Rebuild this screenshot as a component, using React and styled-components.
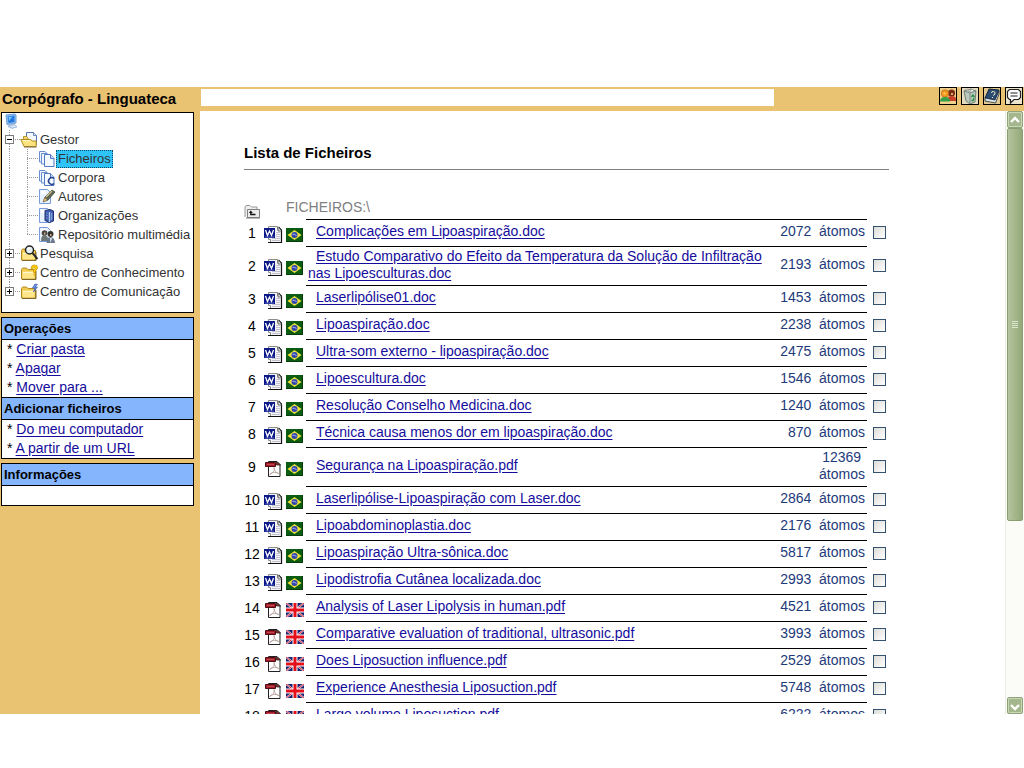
import React, { useState } from "react";
import styled, { createGlobalStyle } from "styled-components";

const files = [
  { name: "Complicações em Lipoaspiração.doc", atoms: 2072, lang: "br" },
  {
    name: "Estudo Comparativo do Efeito da Temperatura da Solução de Infiltração nas Lipoesculturas.doc",
    atoms: 2193,
    lang: "br",
  },
  { name: "Laserlipólise01.doc", atoms: 1453, lang: "br" },
  { name: "Lipoaspiração.doc", atoms: 2238, lang: "br" },
  { name: "Ultra-som externo - lipoaspiração.doc", atoms: 2475, lang: "br" },
  { name: "Lipoescultura.doc", atoms: 1546, lang: "br" },
  { name: "Resolução Conselho Medicina.doc", atoms: 1240, lang: "br" },
  { name: "Técnica causa menos dor em lipoaspiração.doc", atoms: 870, lang: "br" },
  { name: "Segurança na Lipoaspiração.pdf", atoms: 12369, lang: "br" },
  { name: "Laserlipólise-Lipoaspiração com Laser.doc", atoms: 2864, lang: "br" },
  { name: "Lipoabdominoplastia.doc", atoms: 2176, lang: "br" },
  { name: "Lipoaspiração Ultra-sônica.doc", atoms: 5817, lang: "br" },
  { name: "Lipodistrofia Cutânea localizada.doc", atoms: 2993, lang: "br" },
  { name: "Analysis of Laser Lipolysis in human.pdf", atoms: 4521, lang: "uk" },
  { name: "Comparative evaluation of traditional, ultrasonic.pdf", atoms: 3993, lang: "uk" },
  { name: "Does Liposuction influence.pdf", atoms: 2529, lang: "uk" },
  { name: "Experience Anesthesia Liposuction.pdf", atoms: 5748, lang: "uk" },
  { name: "Large volume Liposuction.pdf", atoms: 6222, lang: "uk" },
];

const children = [
  { name: "Ficheiros", icon: "files" },
  { name: "Corpora", icon: "corpora" },
  { name: "Autores", icon: "authors" },
  { name: "Organizações", icon: "organizations" },
  { name: "Repositório multimédia", icon: "media" },
];

const closedFolders = [
  { name: "Pesquisa", icon: "search" },
  { name: "Centro de Conhecimento", icon: "knowledge" },
  { name: "Centro de Comunicação", icon: "communication" },
];

export default function App() {
  const [selected, setSelected] = useState("Ficheiros");

  return (
    <>
      <GlobalStyle />
      <Page>
        <Header>
          <Brand>Corpógrafo - Linguateca</Brand>
          <StatusBox type="text" aria-label="Estado" readOnly />
          <Tools>
            <ToolButton aria-label="Utilizadores">
              <UsersIcon />
            </ToolButton>
            <ToolButton aria-label="Reciclagem">
              <BinIcon />
            </ToolButton>
            <ToolButton aria-label="Ajuda">
              <BookIcon />
            </ToolButton>
            <ToolButton aria-label="Comentários">
              <CommentIcon />
            </ToolButton>
          </Tools>
        </Header>
        <Body>
          <Sidebar>
            <Tree>
              <TreeRoot>
                <ComputerIcon />
              </TreeRoot>
              <TreeRow>
                <Branch $kind="middle">
                  <Expander aria-label="Fechar Gestor">
                    <ExpanderIcon open />
                  </Expander>
                </Branch>
                <FolderIcon kind="open" />
                <TreeLabel>Gestor</TreeLabel>
              </TreeRow>
              {children.map((item, index) => (
                <TreeRow key={item.name}>
                  <Branch $kind="trunk" />
                  <Branch
                    $kind={index === children.length - 1 ? "last" : "middle"}
                  />
                  <DocIcon kind={item.icon} />
                  <TreeLabel
                    className={selected === item.name ? "selected" : ""}
                    onClick={() => setSelected(item.name)}
                  >
                    {item.name}
                  </TreeLabel>
                </TreeRow>
              ))}
              {closedFolders.map((item, index) => (
                <TreeRow key={item.name}>
                  <Branch
                    $kind={
                      index === closedFolders.length - 1 ? "last" : "middle"
                    }
                  >
                    <Expander aria-label={`Abrir ${item.name}`}>
                      <ExpanderIcon />
                    </Expander>
                  </Branch>
                  <FolderIcon kind={item.icon} />
                  <TreeLabel>{item.name}</TreeLabel>
                </TreeRow>
              ))}
            </Tree>
            <Panel>
              <h2>Operações</h2>
              <PanelLinks>
                <li>
                  <a href="#criar">Criar pasta</a>
                </li>
                <li>
                  <a href="#apagar">Apagar</a>
                </li>
                <li>
                  <a href="#mover">Mover para ...</a>
                </li>
              </PanelLinks>
              <h2>Adicionar ficheiros</h2>
              <PanelLinks>
                <li>
                  <a href="#computador">Do meu computador</a>
                </li>
                <li>
                  <a href="#url">A partir de um URL</a>
                </li>
              </PanelLinks>
            </Panel>
            <Panel>
              <h2>Informações</h2>
              <PanelEmpty />
            </Panel>
          </Sidebar>
          <Main>
            <Title>Lista de Ficheiros</Title>
            <FileTable>
              <colgroup>
                <col width="20" />
                <col width="22" />
                <col width="20" />
                <col />
                <col width="88" />
                <col width="22" />
              </colgroup>
              <thead>
                <tr>
                  <IconCell $top>
                    <UpFolderIcon />
                  </IconCell>
                  <td />
                  <PathCell colSpan={4}>FICHEIROS:\</PathCell>
                </tr>
              </thead>
              <tbody>
                {files.map((file, index) => (
                  <FileRow key={file.name}>
                    <NumberCell>{index + 1}</NumberCell>
                    <IconCell>
                      {file.name.endsWith(".pdf") ? <PdfIcon /> : <WordIcon />}
                    </IconCell>
                    <IconCell>
                      {file.lang === "br" ? <BrazilFlag /> : <UkFlag />}
                    </IconCell>
                    <NameCell>
                      <a id={`file-${index}`} href={`#file-${index}`}>
                        {file.name}
                      </a>
                    </NameCell>
                    <CountCell>{`${file.atoms}\u00a0 átomos`}</CountCell>
                    <CheckCell>
                      <input type="checkbox" aria-labelledby={`file-${index}`} />
                    </CheckCell>
                  </FileRow>
                ))}
              </tbody>
            </FileTable>
          </Main>
          <ScrollBar>
            <ScrollButton aria-label="Subir">
              <ArrowIcon d="M4 9 8 5l4 4" />
            </ScrollButton>
            <ScrollTrack>
              <ScrollThumb>
                <i />
                <i />
                <i />
                <i />
              </ScrollThumb>
            </ScrollTrack>
            <ScrollButton aria-label="Descer">
              <ArrowIcon d="m4 6 4 4 4-4" />
            </ScrollButton>
          </ScrollBar>
        </Body>
      </Page>
    </>
  );
}

function ArrowIcon({ d }) {
  return (
    <svg width="16" height="14" viewBox="0 0 16 14">
      <path d={d} fill="none" stroke="#fff" strokeWidth="2.4" />
    </svg>
  );
}

function ExpanderIcon({ open }) {
  return (
    <svg width="9" height="9" viewBox="0 0 9 9" shapeRendering="crispEdges">
      <path d="M.5.5h8v8h-8z" fill="#fff" stroke="#7b7b7b" />
      <path d="M2 4h5v1H2z" fill="#000" />
      {!open && <path d="M4 2h1v5H4z" fill="#000" />}
    </svg>
  );
}

function ComputerIcon() {
  return (
    <svg width="15" height="16" viewBox="0 0 15 16">
      <path d="m2 2 9-1 1 1v8L3 11.500z" fill="#8fc0f0" stroke="#6f9ed6" />
      <path d="m3.500 3.500 7-1V9l-6 1z" fill="#2378e0" />
      <path d="m4.500 4 4-.6L5 8z" fill="#7cc6ff" />
      <path d="m5 12 5-1.500 1 1.500 2 2-5 1.500-4-2z" fill="#b4cbe6" stroke="#88a8d0" strokeWidth=".6" />
      <path d="m6 13.500 5-1 1 1-4 1z" fill="#e3eefb" />
    </svg>
  );
}

function FolderIcon({ kind }) {
  return (
    <svg width="18" height="18" viewBox="0 0 18 18">
      {kind === "open" ? (
        <>
          <path d="M6.500 1.500h7l3 3v9h-10z" fill="#f3f8ff" stroke="#5573b5" />
          <path d="M13.500 1.500v3h3" fill="#c7daf6" stroke="#5573b5" strokeWidth=".8" />
          <path d="M3.500 9V5.500h3L8 7v2" fill="#f5d96b" stroke="#a8801c" strokeWidth=".8" />
          <path d="M.8 8.500h9.700l2 1.500h3.700v5.500H4z" fill="#fbe27c" stroke="#b38a20" />
          <path d="M2.500 9.700H10" stroke="#fff7cf" />
          <path d="M4 16h12.500" stroke="#7b6840" />
        </>
      ) : (
        <>
          <path d="M1.500 15V5.500l1-1.500h4L8 5.500h7.500V15z" fill="#f0c94f" stroke="#b38a20" />
          <path d="M2.500 7.500h12v7h-12z" fill="#ffe68a" />
          <path d="M3 8.500h11" stroke="#fff7cf" />
          <path d="M2 15.500h14V7" fill="none" stroke="#80682c" />
        </>
      )}
      {kind === "search" && (
        <>
          <circle cx="9.500" cy="5" r="4" fill="#e4f1f4" stroke="#222" strokeWidth="1.500" />
          <path d="M7.500 4.500 10 2.500" stroke="#fff" strokeWidth="1.400" />
          <path d="m12.500 8 5 6" stroke="#292929" strokeWidth="2" />
        </>
      )}
      {kind === "knowledge" && (
        <>
          <path d="M11 4.500Q11 1 14.500 1t3 3.200L15.500 7v1.500h-2V6l2-2-1.500-.8L12.500 5z" fill="#ffd400" stroke="#c78e00" strokeWidth=".7" />
          <path d="M13.500 9.500h2v2h-2z" fill="#e8b300" />
        </>
      )}
      {kind === "communication" && (
        <path d="m15 1-2.500 4H15l-1.500 4 4-5H15l2.500-2.500z" fill="#719be9" stroke="#335cb1" strokeWidth=".7" />
      )}
    </svg>
  );
}

function DocIcon({ kind }) {
  const stacked = kind === "files" || kind === "corpora";
  return (
    <svg width="18" height="18" viewBox="0 0 18 18">
      {stacked ? (
        <>
          <path d="M1.500 1.500H7l2 2V12H1.500z" fill="#edf5ff" stroke="#6b8ecf" />
          <path d="M3.500 3.500H9l2 2V14H3.500z" fill="#edf5ff" stroke="#6b8ecf" />
          <path d="M6.500 4.500h6l3.500 4v8H6.500z" fill="#f4f9ff" stroke="#5079c4" />
          <path d="M12.500 4.500v4H16" fill="#c9dcf8" stroke="#5079c4" />
        </>
      ) : (
        <>
          <path d="M1.500 1.500h8l3 3v11h-11z" fill="#e8f2ff" stroke="#799bdc" />
          <path d="M3 3h5v3H3z" fill="#fff" />
        </>
      )}
      {kind === "corpora" && (
        <path d="M16 9.500a3.300 3.300 0 1 0 0 5" fill="none" stroke="#223e8b" strokeWidth="1.500" />
      )}
      {kind === "authors" && (
        <>
          <path d="m5 14 2-5 7-7 3 2-7 8z" fill="#5e6755" stroke="#343a2e" strokeWidth=".7" />
          <path d="m8 9 6-6" stroke="#d3c487" strokeWidth="1.300" />
          <path d="m5 14 2-4 2 2z" fill="#f3c46b" />
        </>
      )}
      {kind === "organizations" && (
        <>
          <path d="m7 3.500 5-1 3.500 1.500V14l-4 1.500L7 13.500z" fill="#3e5daa" stroke="#1f3275" />
          <path d="M11.500 5v10" stroke="#b5cdf7" strokeWidth="1.400" />
          <path d="M8.500 6h1M8.500 8.500h1M8.500 11h1M13.700 6v7" stroke="#8faee8" />
        </>
      )}
      {kind === "media" && (
        <>
          <circle cx="6.500" cy="7" r="2.800" fill="#474540" />
          <path d="M3 15q0-6 3.500-6t4 6z" fill="#6e7773" />
          <circle cx="12.500" cy="8" r="3" fill="#35332f" />
          <path d="M8.500 17q0-6 4-6t4.500 6z" fill="#68798f" />
          <path d="m12 12 .5 5 1.500-5z" fill="#eee" />
          <path d="M6 7.500h1.500M12 9h1.500" stroke="#d6a88a" strokeWidth="1.800" />
        </>
      )}
    </svg>
  );
}

function UpFolderIcon() {
  return (
    <svg width="17" height="15" viewBox="0 0 17 15">
      <path d="M1 13V3l1-1.500h4L7.500 3H13v2" fill="#eee" stroke="#999" />
      <path d="M3.500 5.500h12v8h-12z" fill="#ececec" stroke="#808080" />
      <path d="M2 14h14" stroke="#777" />
      <path d="M11.500 10.500H6.800V8.500" fill="none" stroke="#111" strokeWidth="1.300" />
      <path d="M4.800 9 6.800 6.600 8.800 9z" fill="#111" />
    </svg>
  );
}

function WordIcon() {
  return (
    <svg width="19" height="18" viewBox="0 0 19 18">
      <path d="M4.500.5h9v3h4v13h-11v-3h-2z" fill="#f4f4f6" stroke="#8c8c8c" />
      <path d="M4 16.500h13.500V4.200L14.500 1" fill="none" stroke="#111" strokeWidth="1.200" />
      <path d="M14 1v4h3.500" fill="#ddd" stroke="#555" strokeWidth=".8" />
      <path d="M12 6.500h4M12 8.500h4M12 10.500h4M8 12.500h8M8 14.500h8" stroke="#b4b4c6" strokeWidth=".8" />
      <path d="M0 2h11v10H0z" fill="#0a1787" />
      <path d="m1.500 4 2 5.500L5.500 5l2 4.500 2-5.500" fill="none" stroke="#fff" strokeWidth="1.300" />
      <path d="M1 11h9" stroke="#6f7fd0" strokeWidth=".8" />
    </svg>
  );
}

function PdfIcon() {
  return (
    <svg width="18" height="18" viewBox="0 0 18 18">
      <path d="M4.500 1.500h8.500l3 3v12H4.500z" fill="#fff" stroke="#222" />
      <path d="M12.500 1.500v3.500h4z" fill="#9c2a2a" stroke="#222" strokeWidth=".8" />
      <path d="M1.500 2.500h10v4h-10z" fill="#a51c28" stroke="#4d0d12" />
      <path d="M3 4.500h7" stroke="#bd4a52" />
      <path d="M10 7.500c1 3-1.500 6-4.300 7 .6-2 6-3 9-1-2-.2-4.400-2.500-4.700-6z" fill="none" stroke="#b5a09c" strokeWidth=".9" />
    </svg>
  );
}

function BrazilFlag() {
  return (
    <svg width="17" height="14" viewBox="0 0 17 14">
      <path d="M0 0h17v14H0z" fill="#0b5c12" />
      <path d="M0 13.500h17M16.500 0v14" stroke="#063b0a" />
      <path d="M1.500 7 8.500 2l7 5-7 5z" fill="#efe23c" />
      <circle cx="8.500" cy="7" r="3" fill="#3346ae" />
      <path d="M6.500 6.300q2-.5 4 1.200" fill="none" stroke="#b9c4ee" strokeWidth=".9" />
    </svg>
  );
}

function UkFlag() {
  return (
    <svg width="18" height="14" viewBox="0 0 18 14">
      <path d="M0 0h18v14H0z" fill="#17206e" />
      <path d="m0 0 18 14M18 0 0 14" stroke="#e3cfe0" strokeWidth="2" />
      <path d="m0 0 18 14M18 0 0 14" stroke="#d8232e" strokeWidth=".9" />
      <path d="M9 0v14M0 7h18" stroke="#fff" strokeWidth="5" />
      <path d="M9 0v14M0 7h18" stroke="#e3101b" strokeWidth="3" />
    </svg>
  );
}

function UsersIcon() {
  return (
    <svg width="16" height="16" viewBox="0 0 16 16">
      <path d="M0 0h16v16H0z" fill="#f0d18c" />
      <circle cx="11.500" cy="5" r="3.600" fill="#7a2c16" />
      <path d="M7 13q0-5 4.500-5t4.500 3v2z" fill="#c8402a" />
      <circle cx="5" cy="5.500" r="3.700" fill="#f39a1f" stroke="#a65a0a" strokeWidth=".6" />
      <path d="M0 13.500Q0 9 5 9t5 4.500z" fill="#35a04a" />
      <path d="M3.500 5.500h2M11 6h2" stroke="#ffd27a" strokeWidth="1.500" />
    </svg>
  );
}

function BinIcon() {
  return (
    <svg width="16" height="16" viewBox="0 0 16 16">
      <path d="M0 0h16v16H0z" fill="#e4dcc0" />
      <path d="m2 3 7-2 5 2-1 11-5 2-4-3z" fill="#bac8bd" stroke="#5d6c61" strokeWidth=".8" />
      <path d="m2 3 6 2 6-2M8 5v10" fill="none" stroke="#6f7d72" strokeWidth=".8" />
      <path d="m3 2 3-1 1 3 3-3 2 2" fill="#fff" stroke="#888" strokeWidth=".6" />
      <path d="M9.500 9 11 7l1.500 2M12 10l-1 2.500H9.500" fill="none" stroke="#258b3f" strokeWidth="1.300" />
    </svg>
  );
}

function BookIcon() {
  return (
    <svg width="16" height="16" viewBox="0 0 16 16">
      <path d="M0 0h16v16H0z" fill="#e0c892" />
      <path d="m5 1 10 1-4 10-10-2z" fill="#294c70" stroke="#14283e" />
      <path d="m1 10 10 2 4-9v3l-3.500 9L1 13z" fill="#dfe7ea" stroke="#1d2c3c" strokeWidth=".8" />
      <path d="M7.500 5q0-1.800 2-1.500T11 6L9 7.500M8.500 9v1" fill="none" stroke="#f0ead0" />
    </svg>
  );
}

function CommentIcon() {
  return (
    <svg width="16" height="16" viewBox="0 0 16 16">
      <path d="M0 0h16v16H0z" fill="#ece4cc" />
      <path d="M3.500 1.500h9l2 2v6l-2 2H8L4.500 15v-3.500h-1l-2-2v-6z" fill="#fff" stroke="#222" strokeWidth="1.200" />
      <path d="M4.500 5h7M4.500 8h7" stroke="#222" strokeWidth="1.200" />
    </svg>
  );
}

const GlobalStyle = createGlobalStyle`
  * {
    box-sizing: border-box;
  }
  body {
    margin: 0;
    background: #fff;
    color: #000;
    font-family: "Liberation Sans", Arial, sans-serif;
    font-size: 14px;
  }
  a {
    color: #140c9c;
    text-underline-offset: 2px;
  }
  button {
    padding: 0;
    border: none;
    cursor: pointer;
  }
  svg {
    display: block;
    flex: none;
  }
`;

const Page = styled.div`
  display: flex;
  flex-direction: column;
  height: 100vh;
  padding: 87px 0 54px;
`;

const Header = styled.header`
  display: flex;
  flex: none;
  height: 24px;
  background: #e9c272;
`;

const Brand = styled.h1`
  flex: none;
  width: 201px;
  margin: 0;
  padding-left: 2px;
  font-size: 15px;
  line-height: 24px;
`;

const StatusBox = styled.input`
  flex: none;
  width: 56%;
  height: 17px;
  margin-top: 2px;
  border: none;
  outline: none;
  background: #fff;
`;

const Tools = styled.div`
  display: flex;
  gap: 4px;
  margin-left: auto;
  padding-right: 1px;
`;

const ToolButton = styled.button`
  width: 18px;
  height: 18px;
  border: 1px solid #000;
  background: none;
`;

const Body = styled.div`
  display: flex;
  flex: 1;
  min-height: 0;
`;

const Sidebar = styled.aside`
  display: flex;
  flex: none;
  flex-direction: column;
  gap: 4px;
  width: 200px;
  padding: 1px 6px 0 1px;
  background: #e9c272;
`;

const Tree = styled.nav`
  padding-bottom: 11px;
  border: 1px solid #000;
  background: #fff;
  color: #333;
  font-size: 13px;
`;

const TreeRoot = styled.div`
  height: 17px;
  padding-left: 2px;
`;

const TreeRow = styled.div`
  display: flex;
  align-items: center;
  height: 19px;
`;

const dots = "#999 0 1px, transparent 1px 2px";

const Branch = styled.span`
  display: flex;
  flex: none;
  align-items: center;
  width: 18px;
  height: 19px;
  padding-left: 3px;
  background-image: repeating-linear-gradient(to bottom, ${dots}),
    repeating-linear-gradient(to right, ${dots});
  background-repeat: no-repeat;
  background-position: 7px 0, 7px 9px;
  background-size: 1px ${(props) => (props.$kind === "last" ? "10px" : "19px")},
    ${(props) => (props.$kind === "trunk" ? "0 0" : "11px 1px")};
`;

const Expander = styled.button`
  width: 9px;
  height: 9px;
  background: none;
`;

const TreeLabel = styled.span`
  padding: 0 1px;
  border: 1px solid transparent;
  line-height: 16px;
  white-space: nowrap;
  cursor: pointer;
  &.selected {
    border: 1px dotted #064a66;
    background: #2fc3f7;
  }
`;

const Panel = styled.section`
  border: 1px solid #000;
  background: #fff;
  h2 {
    margin: 0;
    padding-left: 2px;
    border-bottom: 1px solid #000;
    background: #85b6fd;
    font-size: 13px;
    line-height: 21px;
  }
  ul + h2 {
    border-top: 1px solid #000;
  }
`;

const PanelLinks = styled.ul`
  margin: 0;
  padding: 0 0 0 5px;
  list-style: none;
  li {
    line-height: 19px;
    &::before {
      content: "* ";
    }
  }
`;

const PanelEmpty = styled.div`
  height: 19px;
`;

const Main = styled.main`
  flex: 1;
  min-width: 0;
  overflow: hidden;
  padding: 33px 116px 0 44px;
`;

const Title = styled.h2`
  margin: 0 0 28px;
  padding-bottom: 7px;
  border-bottom: 1px solid #808080;
  font-size: 15px;
  line-height: 18px;
`;

const FileTable = styled.table`
  width: 100%;
  border-collapse: collapse;
  table-layout: fixed;
  td {
    padding: 0;
  }
`;

const FileRow = styled.tr`
  height: 27px;
`;

const PathCell = styled.td`
  height: 21px;
  color: #808080;
  line-height: 18px;
  vertical-align: top;
`;

const NumberCell = styled.td`
  && {
    padding-right: 4px;
  }
  text-align: center;
`;

const IconCell = styled.td`
  && {
    padding-top: ${(props) => (props.$top ? "6px" : "4px")};
  }
`;

const NameCell = styled.td`
  && {
    padding: 1px 0 3px 2px;
  }
  border-top: 1px solid #000;
  line-height: 17px;
  text-indent: 8px;
`;

const CountCell = styled.td`
  && {
    padding: 1px 2px 3px 0;
  }
  border-top: 1px solid #000;
  color: #1d3a7a;
  line-height: 17px;
  text-align: right;
`;

const CheckCell = styled.td`
  && {
    padding-left: 6px;
  }
  input {
    display: block;
    appearance: none;
    width: 13px;
    height: 13px;
    margin: 0;
    border: 1px solid #34526f;
    background: linear-gradient(135deg, #dcdcd7, #fff);
    &:checked {
      background: #21a121;
    }
  }
`;

const ScrollBar = styled.div`
  display: flex;
  flex: none;
  flex-direction: column;
  width: 19px;
  padding: 0 1px;
  border-left: 1px solid #eeede5;
  background: #fbfbf8;
`;

const ScrollButton = styled.button`
  display: flex;
  flex: none;
  align-items: center;
  justify-content: center;
  height: 17px;
  border: 1px solid #8fa377;
  border-radius: 2px;
  background: #a3b68c;
  box-shadow: inset 0 0 0 1px #c9d6b8;
`;

const ScrollTrack = styled.div`
  flex: 1;
`;

const ScrollThumb = styled.div`
  display: flex;
  flex-direction: column;
  align-items: center;
  justify-content: center;
  gap: 1px;
  height: 69%;
  border: 1px solid #8a9e72;
  border-radius: 2px;
  background: linear-gradient(to right, #b5c59f, #a0b487 60%, #94a97a);
  i {
    width: 6px;
    height: 1px;
    background: #dce6cf;
  }
`;
